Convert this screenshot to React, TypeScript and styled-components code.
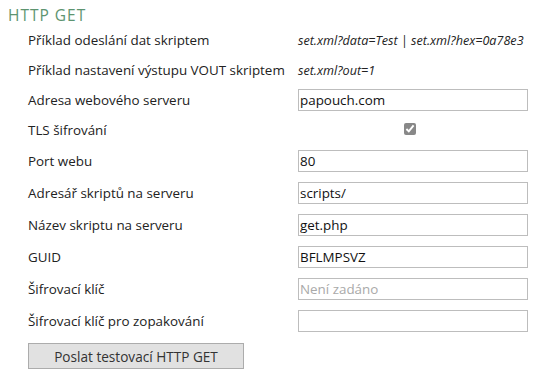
import React from 'react'
import styled, { createGlobalStyle } from 'styled-components'

const Global = createGlobalStyle`
  body {
    margin: 0;
    background: #fff;
    font-family: 'Open Sans', 'Noto Sans', sans-serif;
    font-size: 13.4px;
    color: #222;
  }
`

const Page = styled.div`
  padding: 5px 0 0 8px;
`

const Title = styled.h2`
  margin: 0;
  height: 20px;
  font-size: 15.5px;
  font-weight: 400;
  letter-spacing: 1px;
  color: #5d9470;
  line-height: 20px;
`

const Form = styled.div`
  padding: 0 0 0 20px;
`

const Row = styled.div<{ $tall?: boolean }>`
  display: grid;
  grid-template-columns: 270px 230px;
  align-items: center;
  height: ${({ $tall }) => ($tall ? 32 : 30)}px;
`

const Label = styled.div`
  white-space: nowrap;
`

const Example = styled.div`
  font-style: italic;
  font-size: 12.6px;
  white-space: nowrap;
`

const Input = styled.input`
  box-sizing: border-box;
  width: 230px;
  height: 22px;
  margin: 0;
  padding: 0 1px;
  border: 1px solid #bdbdbd;
  font-family: inherit;
  font-size: 13.4px;
  color: #111;
  outline: none;
  &::placeholder {
    color: #a9a9a9;
  }
`

const CheckCell = styled.div`
  display: flex;
  justify-content: center;
`

const Check = styled.input`
  width: 12px;
  height: 12px;
  margin: 0 0 3px -6px;
  accent-color: #888;
`

const Button = styled.button`
  margin-top: 6px;
  width: 216px;
  height: 26px;
  background: #e1e1e1;
  border: 1px solid #acacac;
  font-family: inherit;
  font-size: 13.6px;
  color: #333;
  cursor: pointer;
`

const fields: Array<[string, string, string?]> = [
  ['Port webu', '80'],
  ['Adresář skriptů na serveru', 'scripts/'],
  ['Název skriptu na serveru', 'get.php'],
  ['GUID', 'BFLMPSVZ'],
  ['Šifrovací klíč', '', 'Není zadáno'],
  ['Šifrovací klíč pro zopakování', ''],
]

const App: React.FC = () => {
  return (
    <Page>
      <Global />
      <Title>HTTP GET</Title>
      <Form>
        <Row>
          <Label>Příklad odeslání dat skriptem</Label>
          <Example>set.xml?data=Test | set.xml?hex=0a78e3</Example>
        </Row>
        <Row>
          <Label>Příklad nastavení výstupu VOUT skriptem</Label>
          <Example>set.xml?out=1</Example>
        </Row>
        <Row>
          <Label>Adresa webového serveru</Label>
          <Input defaultValue="papouch.com" />
        </Row>
        <Row>
          <Label>TLS šifrování</Label>
          <CheckCell>
            <Check type="checkbox" defaultChecked />
          </CheckCell>
        </Row>
        {fields.map(([label, value, placeholder]) => (
          <Row $tall key={label}>
            <Label>{label}</Label>
            <Input defaultValue={value} placeholder={placeholder} />
          </Row>
        ))}
        <Button>Poslat testovací HTTP GET</Button>
      </Form>
    </Page>
  )
}

export default App
